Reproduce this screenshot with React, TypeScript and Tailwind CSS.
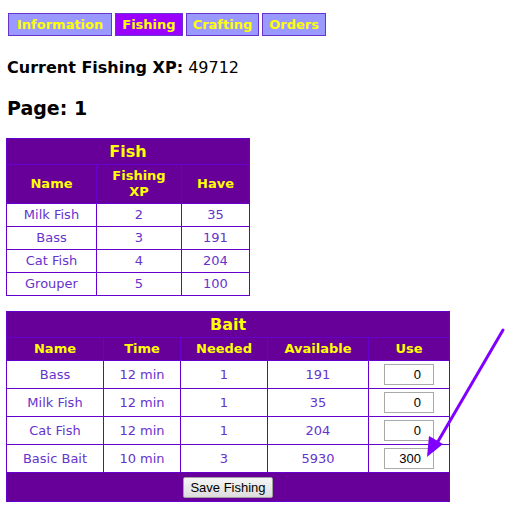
const fish = [
  { name: "Milk Fish", xp: 2, have: 35 },
  { name: "Bass", xp: 3, have: 191 },
  { name: "Cat Fish", xp: 4, have: 204 },
  { name: "Grouper", xp: 5, have: 100 },
];

const bait = [
  { name: "Bass", time: "12 min", needed: 1, available: 191, use: "0" },
  { name: "Milk Fish", time: "12 min", needed: 1, available: 35, use: "0" },
  { name: "Cat Fish", time: "12 min", needed: 1, available: 204, use: "0" },
  { name: "Basic Bait", time: "10 min", needed: 3, available: 5930, use: "300" },
];

const tabs = ["Information", "Fishing", "Crafting", "Orders"];

export default function App() {
  return (
    <div className="relative w-[518px] h-[523px] bg-white font-['DejaVu_Sans',Verdana,sans-serif] text-[13px]">
      {/* tabs */}
      <div className="flex gap-[3px] pl-2 pt-[13px]">
        {tabs.map((t) => (
          <div
            key={t}
            className={`h-[23px] flex items-center border border-[#6633cc] font-bold text-[13px] text-[#ffff00] ${
              t === "Fishing" ? "bg-[#9900ff]" : "bg-[#9999ff]"
            } ${t === "Information" ? "px-[8px]" : "px-[6px]"}`}
          >
            {t}
          </div>
        ))}
      </div>

      <div className="pl-[7px] mt-[22px] text-[16px] leading-[20px] text-black">
        <span className="font-bold">Current Fishing XP:</span> 49712
      </div>

      <div className="pl-[7px] mt-[18px] text-[19px] leading-[24px] font-bold text-black">Page: 1</div>

      {/* Fish table */}
      <table className="ml-[6px] mt-[18px] w-[244px] border-collapse border border-[#6600cc] text-center">
        <thead>
          <tr className="bg-[#660099] h-[26px]">
            <th colSpan={3} className="border border-[#6600cc] text-[16px] font-bold text-[#ffff00]">Fish</th>
          </tr>
          <tr className="bg-[#660099] h-[39px] text-[#ffff00] font-bold leading-[16px]">
            <th className="w-[90px] border border-[#6600cc]">Name</th>
            <th className="w-[85px] border border-[#6600cc]">Fishing<br />XP</th>
            <th className="border border-[#6600cc]">Have</th>
          </tr>
        </thead>
        <tbody className="text-[#6633cc]">
          {fish.map((f) => (
            <tr key={f.name} className="h-[23px]">
              <td className="border border-[#6600cc]">{f.name}</td>
              <td className="border border-[#6600cc]">{f.xp}</td>
              <td className="border border-[#6600cc]">{f.have}</td>
            </tr>
          ))}
        </tbody>
      </table>

      {/* Bait table */}
      <table className="ml-[6px] mt-[15px] w-[444px] border-collapse border border-[#6600cc] text-center">
        <thead>
          <tr className="bg-[#660099] h-[26px]">
            <th colSpan={5} className="border border-[#6600cc] text-[16px] font-bold text-[#ffff00]">Bait</th>
          </tr>
          <tr className="bg-[#660099] h-[23px] text-[#ffff00] font-bold">
            <th className="w-[97px] border border-[#6600cc]">Name</th>
            <th className="w-[77px] border border-[#6600cc]">Time</th>
            <th className="w-[87px] border border-[#6600cc]">Needed</th>
            <th className="w-[101px] border border-[#6600cc]">Available</th>
            <th className="border border-[#6600cc]">Use</th>
          </tr>
        </thead>
        <tbody className="text-[#6633cc]">
          {bait.map((b) => (
            <tr key={b.name} className="h-[28px]">
              <td className="border border-[#6600cc]">{b.name}</td>
              <td className="border border-[#6600cc]">{b.time}</td>
              <td className="border border-[#6600cc]">{b.needed}</td>
              <td className="border border-[#6600cc]">{b.available}</td>
              <td className="border border-[#6600cc]">
                <input
                  readOnly
                  value={b.use}
                  className="w-[50px] h-[21px] border border-[#a9a9a9] bg-white text-right pr-[12px] text-[13px] text-black font-['Liberation_Sans',Arial,sans-serif] outline-none"
                />
              </td>
            </tr>
          ))}
          <tr className="bg-[#660099] h-[29px]">
            <td colSpan={5} className="border border-[#6600cc]">
              <button className="h-[21px] px-[6px] border border-[#a0a0a0] rounded-[2px] bg-gradient-to-b from-[#f6f6f6] to-[#dddddd] text-[13px] text-black font-['Liberation_Sans',Arial,sans-serif] leading-[19px]">
                Save Fishing
              </button>
            </td>
          </tr>
        </tbody>
      </table>

      {/* annotation arrow */}
      <svg className="absolute left-0 top-0 pointer-events-none" width="518" height="523">
        <line x1="503" y1="330" x2="433" y2="450" stroke="#8000ff" strokeWidth="3" strokeLinecap="round" />
        <polygon points="427,457 429,436 443,444" fill="#8000ff" />
      </svg>
    </div>
  );
}
